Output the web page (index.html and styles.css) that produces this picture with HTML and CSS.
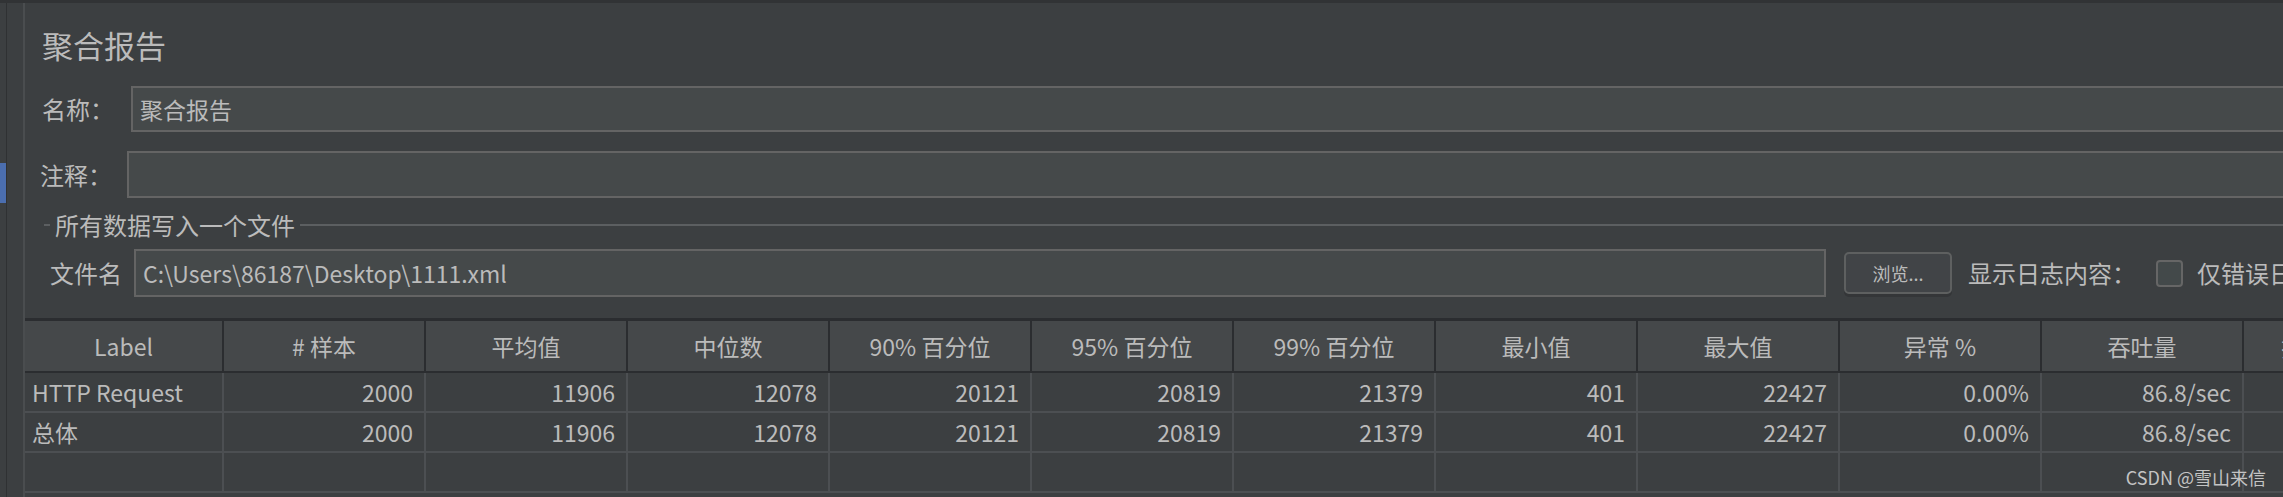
FILE: index.html
```html
<!DOCTYPE html>
<html lang="zh-CN">
<head>
<meta charset="utf-8">
<title>聚合报告</title>
<link rel="stylesheet" href="styles.css">
</head>
<body>
<div class="app">
  <div class="rail"><div class="rail-mark"></div></div>
  <div class="tree-strip"></div>
  <main class="panel">
    <div class="form">
      <h1 class="title">聚合报告</h1>
      <div class="field-row name-row">
        <span class="field-label">名称：</span>
        <div class="text-input">聚合报告</div>
      </div>
      <div class="field-row comment-row">
        <span class="field-label">注释：</span>
        <div class="text-input"></div>
      </div>
      <section class="file-group">
        <div class="group-title">
          <span class="group-dash"></span>
          <span class="legend">所有数据写入一个文件</span>
          <span class="group-line"></span>
        </div>
        <div class="file-row">
          <span class="file-label">文件名</span>
          <div class="text-input file-input">C:\Users\86187\Desktop\1111.xml</div>
          <button class="browse">浏览...</button>
          <span class="log-label">显示日志内容：</span>
          <span class="checkbox"></span>
          <span class="check-label">仅错误日志</span>
        </div>
      </section>
    </div>
    <div class="table">
      <div class="trow thead">
        <div class="cell">Label</div>
        <div class="cell"># 样本</div>
        <div class="cell">平均值</div>
        <div class="cell">中位数</div>
        <div class="cell">90% 百分位</div>
        <div class="cell">95% 百分位</div>
        <div class="cell">99% 百分位</div>
        <div class="cell">最小值</div>
        <div class="cell">最大值</div>
        <div class="cell">异常 %</div>
        <div class="cell">吞吐量</div>
        <div class="cell">接收 KB/sec</div>
      </div>
      <div class="trow">
        <div class="cell text">HTTP Request</div>
        <div class="cell num">2000</div>
        <div class="cell num">11906</div>
        <div class="cell num">12078</div>
        <div class="cell num">20121</div>
        <div class="cell num">20819</div>
        <div class="cell num">21379</div>
        <div class="cell num">401</div>
        <div class="cell num">22427</div>
        <div class="cell num">0.00%</div>
        <div class="cell num">86.8/sec</div>
        <div class="cell num"></div>
      </div>
      <div class="trow">
        <div class="cell text">总体</div>
        <div class="cell num">2000</div>
        <div class="cell num">11906</div>
        <div class="cell num">12078</div>
        <div class="cell num">20121</div>
        <div class="cell num">20819</div>
        <div class="cell num">21379</div>
        <div class="cell num">401</div>
        <div class="cell num">22427</div>
        <div class="cell num">0.00%</div>
        <div class="cell num">86.8/sec</div>
        <div class="cell num"></div>
      </div>
      <div class="trow">
        <div class="cell"></div><div class="cell"></div><div class="cell"></div><div class="cell"></div>
        <div class="cell"></div><div class="cell"></div><div class="cell"></div><div class="cell"></div>
        <div class="cell"></div><div class="cell"></div><div class="cell"></div><div class="cell"></div>
      </div>
    </div>
  </main>
</div>
<div class="watermark">CSDN @雪山来信</div>
</body>
</html>
```
FILE: styles.css
```css
html, body {
  margin: 0;
  padding: 0;
  background: #3c3f41;
  overflow: hidden;
  width: 2283px;
  height: 497px;
}
body {
  position: relative;
  font-family: "Noto Sans CJK SC", "Noto Sans", sans-serif;
  color: #bbbbbb;
}
.app {
  display: flex;
  width: 2283px;
  height: 494px;
  overflow: hidden;
  border-top: 3px solid #313335;
}
.rail {
  width: 6px;
  flex: none;
  padding-top: 160px;
  border-right: 1px solid #2f3133;
}
.rail-mark {
  height: 40px;
  background: #4b6eaf;
}
.tree-strip {
  width: 16px;
  flex: none;
  border-right: 2px solid #4a4d4f;
}
.panel {
  flex: none;
  width: 2320px;
  display: flex;
  flex-direction: column;
}
.form {
  padding-left: 17px;
}
.title {
  margin: 24px 0 0 0;
  font-size: 31px;
  font-weight: normal;
  line-height: 36px;
  height: 36px;
}
.field-row {
  display: flex;
  align-items: center;
}
.name-row {
  margin-top: 23px;
}
.comment-row {
  margin-top: 19px;
}
.field-label {
  font-size: 24px;
  line-height: 30px;
  width: 89px;
  flex: none;
  white-space: nowrap;
}
.comment-row .field-label {
  width: 87px;
  margin-left: -2px;
}
.text-input {
  flex: 1;
  box-sizing: border-box;
  height: 46px;
  background: #45494a;
  border: 2px solid #646464;
  padding-left: 7px;
  font-size: 23px;
  line-height: 42px;
  white-space: nowrap;
}
.comment-row .text-input {
  height: 47px;
}
.file-group {
  margin-top: 13px;
}
.group-title {
  display: flex;
  align-items: center;
  height: 28px;
}
.group-dash {
  width: 6px;
  height: 2px;
  margin-left: 2px;
  background: #5c5f61;
}
.legend {
  font-size: 24px;
  line-height: 28px;
  margin: 0 5px;
}
.group-line {
  flex: 1;
  height: 2px;
  background: #5c5f61;
}
.file-row {
  display: flex;
  align-items: center;
  margin-top: 10px;
  padding-left: 8px;
}
.file-label {
  font-size: 24px;
  width: 84px;
  flex: none;
  line-height: 30px;
}
.file-input {
  flex: none;
  width: 1692px;
  height: 48px;
  line-height: 44px;
  font-size: 23px;
}
.browse {
  flex: none;
  margin-left: 18px;
  width: 108px;
  height: 42px;
  box-sizing: border-box;
  background: #414447;
  border: 2px solid #5e6060;
  border-radius: 5px;
  box-shadow: 0 3px 0 #343638;
  color: #bbbbbb;
  font-family: inherit;
  font-size: 18px;
  padding: 0;
}
.log-label {
  margin-left: 16px;
  font-size: 24px;
  width: 188px;
  flex: none;
  line-height: 30px;
  white-space: nowrap;
}
.checkbox {
  flex: none;
  box-sizing: border-box;
  width: 27px;
  height: 27px;
  border: 2px solid #666666;
  border-radius: 4px;
  background: #43494a;
}
.check-label {
  margin-left: 14px;
  font-size: 24px;
  line-height: 30px;
  white-space: nowrap;
}
.table {
  margin-top: 21px;
  border-top: 3px solid #2b2d30;
}
.trow {
  display: grid;
  grid-template-columns: 199px repeat(11, 202px);
  height: 38px;
  border-bottom: 2px solid #4c4f52;
}
.thead {
  height: 50px;
  background: #45484a;
  border-bottom: 2px solid #2b2d30;
}
.cell {
  box-sizing: border-box;
  border-right: 2px solid #4c4f52;
  font-size: 23px;
  line-height: 38px;
  white-space: nowrap;
  overflow: hidden;
}
.thead .cell {
  border-right-color: #2b2d30;
  text-align: center;
  line-height: 50px;
}
.cell.text {
  padding-left: 7px;
}
.cell.num {
  text-align: right;
  padding-right: 11px;
}
.watermark {
  position: absolute;
  right: 17px;
  top: 464px;
  font-size: 18px;
  line-height: 26px;
  color: #c4c4c4;
  white-space: nowrap;
}
```
